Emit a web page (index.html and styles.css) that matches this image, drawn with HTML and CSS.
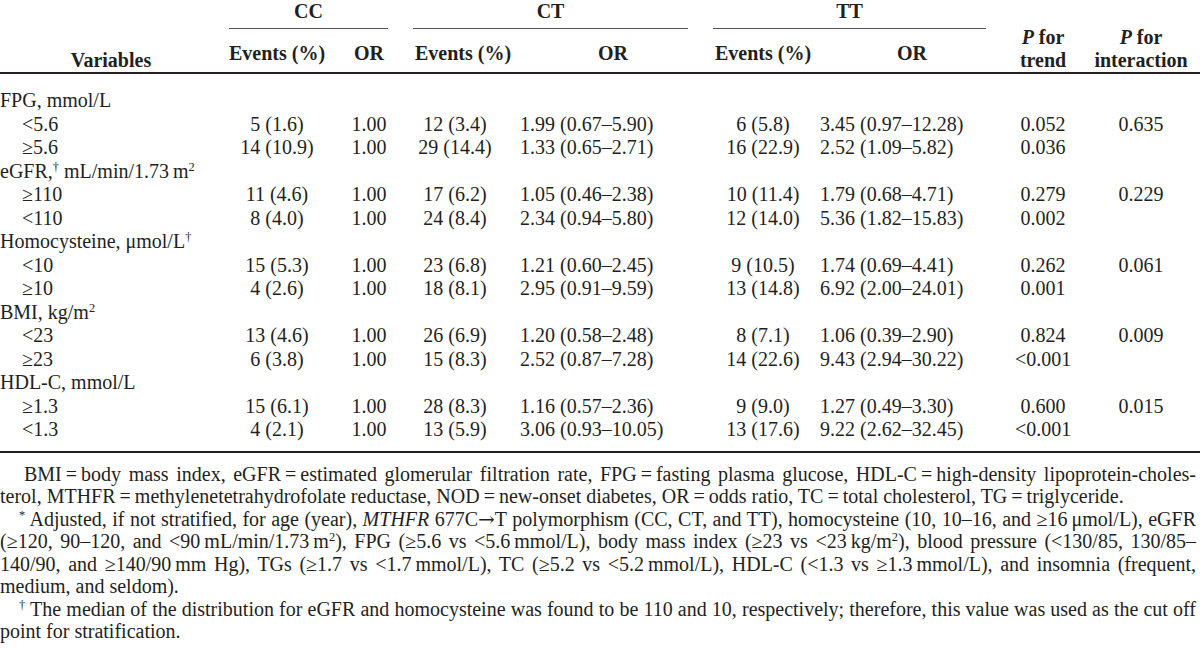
FILE: index.html
```html
<!DOCTYPE html>
<html lang="en">
<head>
<meta charset="utf-8">
<title>Stratified analysis table</title>
<link rel="stylesheet" href="styles.css">
</head>
<body>
<div class="page">
  <table class="tbl">
    <colgroup>
      <col class="c-var">
      <col class="c-ccev">
      <col class="c-ccor">
      <col class="c-ctev">
      <col class="c-ctor">
      <col class="c-ttev">
      <col class="c-ttor">
      <col class="c-trend">
      <col class="c-int">
    </colgroup>
    <thead>
      <tr class="hr1">
        <th rowspan="2" class="h-var">Variables</th>
        <th colspan="2" class="grp"><div class="grp-in">CC</div></th>
        <th colspan="2" class="grp"><div class="grp-in">CT</div></th>
        <th colspan="2" class="grp"><div class="grp-in">TT</div></th>
        <th rowspan="2" class="h-p"><i>P</i> for<br>trend</th>
        <th rowspan="2" class="h-p"><i>P</i> for<br>interaction</th>
      </tr>
      <tr class="hr2">
        <th class="h-sub">Events (%)</th>
        <th class="h-sub">OR</th>
        <th class="h-sub">Events (%)</th>
        <th class="h-sub">OR</th>
        <th class="h-sub">Events (%)</th>
        <th class="h-sub">OR</th>
      </tr>
    </thead>
    <tbody>
      <tr class="grp-row first"><td class="lab" colspan="9">FPG, mmol/L</td></tr>
      <tr><td class="lab sub">&lt;5.6</td><td class="ev">5 (1.6)</td><td class="ev">1.00</td><td class="ev ct">12 (3.4)</td><td class="or-ct">1.99 (0.67–5.90)</td><td class="ev">6 (5.8)</td><td class="or-tt">3.45 (0.97–12.28)</td><td class="pv">0.052</td><td class="pv">0.635</td></tr>
      <tr><td class="lab sub">≥5.6</td><td class="ev">14 (10.9)</td><td class="ev">1.00</td><td class="ev ct">29 (14.4)</td><td class="or-ct">1.33 (0.65–2.71)</td><td class="ev">16 (22.9)</td><td class="or-tt">2.52 (1.09–5.82)</td><td class="pv">0.036</td><td class="pv"></td></tr>
      <tr class="grp-row"><td class="lab" colspan="9">eGFR,<span class="sup">†</span> mL/min/1.73&#8201;m<span class="sup2">2</span></td></tr>
      <tr><td class="lab sub">≥110</td><td class="ev">11 (4.6)</td><td class="ev">1.00</td><td class="ev ct">17 (6.2)</td><td class="or-ct">1.05 (0.46–2.38)</td><td class="ev">10 (11.4)</td><td class="or-tt">1.79 (0.68–4.71)</td><td class="pv">0.279</td><td class="pv">0.229</td></tr>
      <tr><td class="lab sub">&lt;110</td><td class="ev">8 (4.0)</td><td class="ev">1.00</td><td class="ev ct">24 (8.4)</td><td class="or-ct">2.34 (0.94–5.80)</td><td class="ev">12 (14.0)</td><td class="or-tt">5.36 (1.82–15.83)</td><td class="pv">0.002</td><td class="pv"></td></tr>
      <tr class="grp-row"><td class="lab" colspan="9">Homocysteine, μmol/L<span class="sup">†</span></td></tr>
      <tr><td class="lab sub">&lt;10</td><td class="ev">15 (5.3)</td><td class="ev">1.00</td><td class="ev ct">23 (6.8)</td><td class="or-ct">1.21 (0.60–2.45)</td><td class="ev">9 (10.5)</td><td class="or-tt">1.74 (0.69–4.41)</td><td class="pv">0.262</td><td class="pv">0.061</td></tr>
      <tr><td class="lab sub">≥10</td><td class="ev">4 (2.6)</td><td class="ev">1.00</td><td class="ev ct">18 (8.1)</td><td class="or-ct">2.95 (0.91–9.59)</td><td class="ev">13 (14.8)</td><td class="or-tt">6.92 (2.00–24.01)</td><td class="pv">0.001</td><td class="pv"></td></tr>
      <tr class="grp-row"><td class="lab" colspan="9">BMI, kg/m<span class="sup2">2</span></td></tr>
      <tr><td class="lab sub">&lt;23</td><td class="ev">13 (4.6)</td><td class="ev">1.00</td><td class="ev ct">26 (6.9)</td><td class="or-ct">1.20 (0.58–2.48)</td><td class="ev">8 (7.1)</td><td class="or-tt">1.06 (0.39–2.90)</td><td class="pv">0.824</td><td class="pv">0.009</td></tr>
      <tr><td class="lab sub">≥23</td><td class="ev">6 (3.8)</td><td class="ev">1.00</td><td class="ev ct">15 (8.3)</td><td class="or-ct">2.52 (0.87–7.28)</td><td class="ev">14 (22.6)</td><td class="or-tt">9.43 (2.94–30.22)</td><td class="pv">&lt;0.001</td><td class="pv"></td></tr>
      <tr class="grp-row"><td class="lab" colspan="9">HDL-C, mmol/L</td></tr>
      <tr><td class="lab sub">≥1.3</td><td class="ev">15 (6.1)</td><td class="ev">1.00</td><td class="ev ct">28 (8.3)</td><td class="or-ct">1.16 (0.57–2.36)</td><td class="ev">9 (9.0)</td><td class="or-tt">1.27 (0.49–3.30)</td><td class="pv">0.600</td><td class="pv">0.015</td></tr>
      <tr class="last"><td class="lab sub">&lt;1.3</td><td class="ev">4 (2.1)</td><td class="ev">1.00</td><td class="ev ct">13 (5.9)</td><td class="or-ct">3.06 (0.93–10.05)</td><td class="ev">13 (17.6)</td><td class="or-tt">9.22 (2.62–32.45)</td><td class="pv">&lt;0.001</td><td class="pv"></td></tr>
    </tbody>
  </table>

  <div class="notes">
    <div class="ln just ind">BMI&#8201;=&#8201;body mass index, eGFR&#8201;=&#8201;estimated glomerular filtration rate, FPG&#8201;=&#8201;fasting plasma glucose, HDL-C&#8201;=&#8201;high-density lipoprotein-choles-</div>
    <div class="ln">terol, MTHFR&#8201;=&#8201;methylenetetrahydrofolate reductase, NOD&#8201;=&#8201;new-onset diabetes, OR&#8201;=&#8201;odds ratio, TC&#8201;=&#8201;total cholesterol, TG&#8201;=&#8201;triglyceride.</div>
    <div class="ln just mark"><span class="sup">*</span> Adjusted, if not stratified, for age (year), <i>MTHFR</i> 677C<span class="arr">→</span>T polymorphism (CC, CT, and TT), homocysteine (10, 10–16, and ≥16&#8201;μmol/L), eGFR</div>
    <div class="ln just">(≥120, 90–120, and &lt;90&#8201;mL/min/1.73&#8201;m<span class="sup2">2</span>), FPG (≥5.6 vs &lt;5.6&#8201;mmol/L), body mass index (≥23 vs &lt;23&#8201;kg/m<span class="sup2">2</span>), blood pressure (&lt;130/85, 130/85–</div>
    <div class="ln just">140/90, and ≥140/90&#8201;mm Hg), TGs (≥1.7 vs &lt;1.7&#8201;mmol/L), TC (≥5.2 vs &lt;5.2&#8201;mmol/L), HDL-C (&lt;1.3 vs ≥1.3&#8201;mmol/L), and insomnia (frequent,</div>
    <div class="ln">medium, and seldom).</div>
    <div class="ln just mark"><span class="sup">†</span> The median of the distribution for eGFR and homocysteine was found to be 110 and 10, respectively; therefore, this value was used as the cut off</div>
    <div class="ln">point for stratification.</div>
  </div>
</div>
</body>
</html>
```

FILE: styles.css
```css
html, body {
  margin: 0;
  padding: 0;
  background: #ffffff;
}

body {
  color: #231f20;
  font-family: "Liberation Serif", "Times New Roman", serif;
  font-size: 20px;
}

.page {
  width: 1200px;
}

.tbl {
  width: 1200px;
  border-collapse: collapse;
  table-layout: fixed;
}

.tbl th,
.tbl td {
  padding: 0;
  white-space: nowrap;
}

.c-var { width: 222px; }
.c-ccev { width: 110px; }
.c-ccor { width: 74px; }
.c-ctev { width: 114px; }
.c-ctor { width: 186px; }
.c-ttev { width: 114px; }
.c-ttor { width: 184px; }
.c-trend { width: 78px; }
.c-int { width: 118px; }

/* header */
.tbl th {
  font-weight: bold;
  text-align: center;
  vertical-align: bottom;
  line-height: 23px;
}

.grp {
  padding: 0;
}

.grp-in {
  margin: 0 18px 0 7px;
  padding-bottom: 6px;
  line-height: 22px;
  border-bottom: 1px solid #555;
}

.hr2 th,
.h-var,
.h-p {
  padding-bottom: 7px;
  border-bottom: 2px solid #231f20;
}

.h-var {
  text-align: left;
}

.hr2 th {
  padding-top: 13px;
}

/* body */
.tbl td {
  line-height: 23.5px;
  vertical-align: middle;
}

.grp-row.first td {
  padding-top: 15px;
}

.lab {
  text-align: left;
}

.lab.sub {
  padding-left: 22px;
}

.ev,
.pv {
  text-align: center;
}

.ev.ct {
  padding-right: 16px;
}

.or-ct {
  text-align: left;
  padding-left: 16px;
}

.or-tt {
  text-align: left;
  padding-left: 21px;
}

.tbl tr.last td {
  padding-bottom: 9px;
  border-bottom: 2px solid #231f20;
}

.sup {
  font-size: 0.62em;
  vertical-align: 0.55em;
  line-height: 0;
}

.sup2 {
  font-size: 0.62em;
  vertical-align: 0.6em;
  line-height: 0;
}

.arr {
  font-family: "DejaVu Serif", serif;
  font-size: 1em;
  line-height: 0;
}

/* notes */
.notes {
  width: 1196px;
  padding-top: 10px;
}

.ln {
  line-height: 22.5px;
  white-space: nowrap;
}

.ln.just {
  white-space: normal;
  text-align: justify;
  text-align-last: justify;
}

.ind {
  padding-left: 24px;
}

.mark {
  padding-left: 19px;
}
```
